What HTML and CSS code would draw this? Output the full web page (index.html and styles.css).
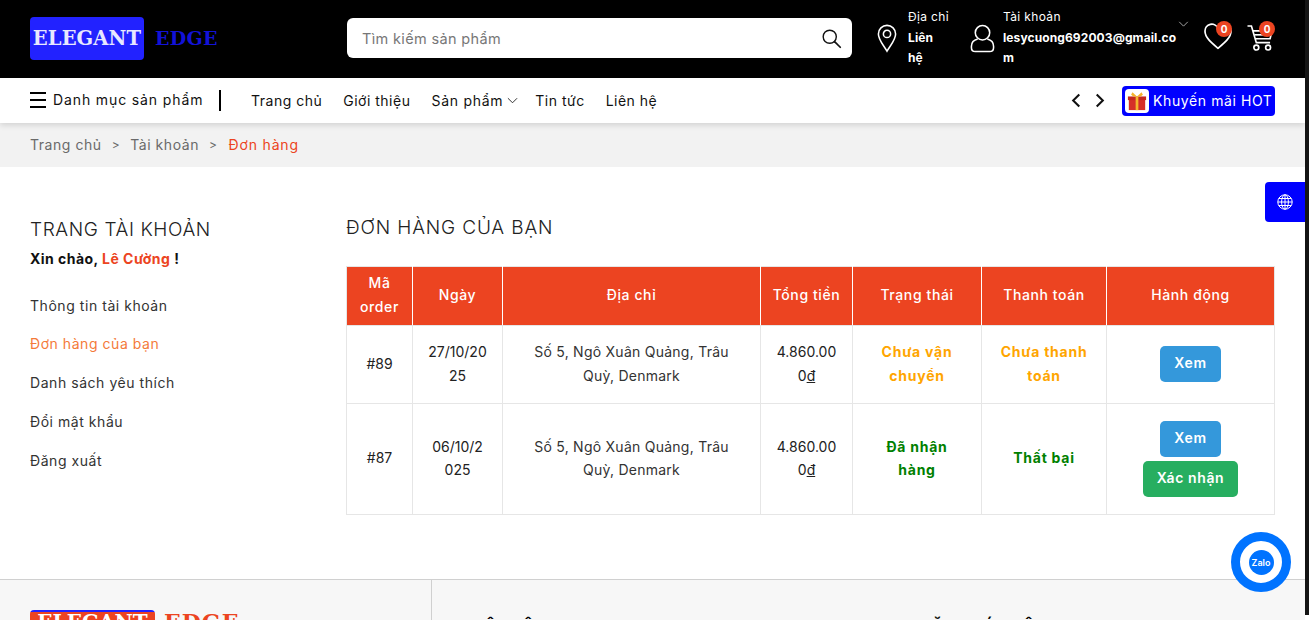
FILE: index.html
```html
<!DOCTYPE html>
<html lang="vi">
<head>
<meta charset="utf-8">
<title>Đơn hàng</title>
<link rel="stylesheet" href="styles.css">
</head>
<body>
<div class="page">
<header class="topbar">
  <a class="logo"><span class="logo-a">ELEGANT</span><span class="logo-b">EDGE</span></a>
  <form class="search">
    <span class="search-text">Tìm kiếm sản phẩm</span>
    <svg class="search-icon" viewBox="0 0 24 24" fill="none" stroke="#111" stroke-width="1.6" stroke-linecap="round"><circle cx="10" cy="10" r="7.5"/><path d="M15.5 15.5l6.5 6.5" stroke-width="2"/></svg>
  </form>
  <div class="info info-addr">
    <svg class="pin" viewBox="0 0 24 32" fill="none" stroke="#fff" stroke-width="1.7"><path d="M12 30C8 23 2.5 17.500 2.500 11a9.500 9.500 0 0 1 19 0C21.500 17.500 16 23 12 30z"/><circle cx="12" cy="11" r="4"/></svg>
    <div class="info-text"><div class="info-label">Địa chỉ</div><div class="info-val">Liên<br>hệ</div></div>
  </div>
  <div class="info info-acct">
    <svg class="user" viewBox="0 0 26 30" fill="none" stroke="#fff" stroke-width="1.6"><circle cx="13" cy="9" r="7.500"/><path d="M8 15.500C4 16.500 1.500 19 1.500 23v1.500c0 2.500 1.500 4 4 4h15c2.500 0 4-1.500 4-4V23c0-4-2.500-6.500-6.500-7.500"/></svg>
    <div class="info-text acct-text"><div class="info-label">Tài khoản</div><div class="info-val">lesycuong692003@gmail.co<br>m</div></div>
    <svg class="acct-chev" viewBox="0 0 12 7" fill="none" stroke="#bbb" stroke-width="1"><path d="M1 1l5 5 5-5"/></svg>
  </div>
  <div class="icon-btn heart-btn">
    <svg class="heart" viewBox="1 1 28 26.500" fill="none" stroke="#fff" stroke-width="1.700"><path d="M15 26C9 21 2 15.500 2 9a6.800 6.800 0 0 1 13-3 6.800 6.800 0 0 1 13 3c0 6.500-7 12-13 17z"/></svg>
    <span class="badge">0</span>
  </div>
  <div class="icon-btn cart-btn">
    <svg class="cart" viewBox="0.5 1 26.500 27.500" preserveAspectRatio="xMinYMin meet" fill="none" stroke="#fff" stroke-width="1.700"><path d="M1 2h4l5 17h14M6.500 7H26l-2 8H9"/><path d="M8 11h17"/><circle cx="10" cy="24" r="2.500"/><circle cx="22" cy="24" r="2.500"/></svg>
    <span class="badge">0</span>
  </div>
</header>

<nav class="navbar">
  <div class="cat"><span class="burger"><i></i><i></i><i></i></span><span class="cat-label">Danh mục sản phẩm</span></div>
  <div class="menu">
    <a>Trang chủ</a><a>Giới thiệu</a>
    <a class="has-sub">Sản phẩm<svg viewBox="0 0 12 7" fill="none" stroke="#222" stroke-width="1"><path d="M1 1l5 5 5-5"/></svg></a>
    <a>Tin tức</a><a>Liên hệ</a>
  </div>
  <div class="arrows">
    <svg viewBox="0 0 10 16" fill="none" stroke="#111" stroke-width="2.200"><path d="M8.500 1.500L2 8l6.500 6.500"/></svg>
    <svg viewBox="0 0 10 16" fill="none" stroke="#111" stroke-width="2.200"><path d="M1.500 1.500L8 8l-6.500 6.500"/></svg>
  </div>
  <a class="promo">
    <span class="gift"><svg viewBox="0 0 22 22"><rect x="2" y="8" width="18" height="13" fill="#d62f28"/><rect x="1" y="6" width="20" height="4" fill="#c4281f"/><rect x="9.500" y="6" width="3" height="15" fill="#f5b52c"/><path d="M11 6L6 1.500 4.500 4 7 6zM11 6l5-4.500L17.500 4 15 6z" fill="#f5b52c"/></svg></span>
    Khuyến mãi HOT
  </a>
</nav>

<div class="crumbs"><a>Trang chủ</a><span class="sep">&gt;</span><a>Tài khoản</a><span class="sep">&gt;</span><a class="cur">Đơn hàng</a></div>

<main class="account">
  <aside class="side">
    <h2>TRANG TÀI KHOẢN</h2>
    <p class="hello">Xin chào, <span>Lê Cường</span> !</p>
    <ul>
      <li>Thông tin tài khoản</li>
      <li class="active">Đơn hàng của bạn</li>
      <li>Danh sách yêu thích</li>
      <li>Đổi mật khẩu</li>
      <li>Đăng xuất</li>
    </ul>
  </aside>
  <section class="orders">
    <h1>ĐƠN HÀNG CỦA BẠN</h1>
    <table>
      <colgroup><col class="c1"><col class="c2"><col class="c3"><col class="c4"><col class="c5"><col class="c6"><col class="c7"></colgroup>
      <thead><tr><th>Mã order</th><th>Ngày</th><th>Địa chỉ</th><th>Tổng tiền</th><th>Trạng thái</th><th>Thanh toán</th><th>Hành động</th></tr></thead>
      <tbody>
        <tr class="r1"><td>#89</td><td>27/10/20<br>25</td><td class="addr">Số 5, Ngô Xuân Quảng, Trâu Quỳ, Denmark</td><td>4.860.00<br>0<u>đ</u></td><td class="st wait">Chưa vận chuyển</td><td class="st wait">Chưa thanh toán</td><td><a class="btn blue">Xem</a></td></tr>
        <tr class="r2"><td>#87</td><td>06/10/2<br>025</td><td class="addr">Số 5, Ngô Xuân Quảng, Trâu Quỳ, Denmark</td><td>4.860.00<br>0<u>đ</u></td><td class="st ok">Đã nhận hàng</td><td class="st ok">Thất bại</td><td class="acts"><a class="btn blue">Xem</a><a class="btn green">Xác nhận</a></td></tr>
      </tbody>
    </table>
  </section>
</main>

<footer class="foot">
  <div class="foot-left"><span class="flogo-a">ELEGANT</span><span class="flogo-b">EDGE</span></div>
  <div class="foot-right"><h4>LIÊN HỆ</h4><h4>ĐĂNG KÝ NHẬN TIN</h4></div>
</footer>
</div>

<a class="lang"><svg viewBox="0 0 16 16" fill="none" stroke="#fff" stroke-width="1"><circle cx="8" cy="8" r="7.200"/><ellipse cx="8" cy="8" rx="3.400" ry="7.200"/><path d="M8 .8v14.400M.8 8h14.400M1.700 4.500h12.600M1.700 11.500h12.600"/></svg></a>
<a class="zalo"><span>Zalo</span></a>
<div class="scroll"></div>
</body>
</html>
```

FILE: styles.css
```css
* { box-sizing: border-box; }
html, body { margin: 0; height: 620px; overflow: hidden; background: #fff; }
body { font-family: Inter, "Noto Sans", sans-serif; font-size: 14px; color: #222; }
.page { width: 1305px; height: 620px; overflow: hidden; }
a { color: inherit; text-decoration: none; }

.topbar { height: 78px; background: #000; display: flex; align-items: center; padding: 0 30px 2px; color: #fff; position: relative; }
.logo { display: flex; align-items: center; width: 317px; font-family: "DejaVu Serif", serif; font-weight: 700; }
.logo-a { width: 114px; height: 43px; background: #2222ff; border-radius: 4px; color: #e8e8ff; display: flex; align-items: center; justify-content: center; font-size: 19.500px; letter-spacing: .1px; }
.logo-b { color: #1212d8; margin-left: 11px; font-size: 19px; letter-spacing: .3px; }
.search { width: 505px; height: 40px; background: #fff; border-radius: 6px; display: flex; align-items: center; justify-content: space-between; padding: 0 10px 0 15px; }
.search-text { color: #777; font-size: 14.500px; letter-spacing: .35px; }
.search-icon { width: 21px; height: 21px; }
.info { display: flex; align-items: flex-start; align-self: flex-start; }
.info-addr { margin-left: 24px; width: 94px; }
.pin { width: 22px; height: 29px; margin: 24px 0 0 0; }
.info-text { margin-left: 10px; font-size: 12px; line-height: 20.500px; padding-top: 7px; }
.info-label { letter-spacing: .35px; }
.info-val { font-weight: 700; letter-spacing: .1px; }
.info-acct { width: 232px; position: relative; }
.user { width: 25px; height: 29px; margin: 24px 0 0 0; flex: none; }
.acct-text { white-space: nowrap; margin-left: 8px; }
.acct-chev { width: 11px; height: 6px; position: absolute; left: 208px; top: 21px; }
.icon-btn { position: relative; align-self: flex-start; }
.heart-btn { margin: 23px 0 0 2px; }
.heart { display: block; width: 28px; height: 27px; }
.cart-btn { margin: 25px 0 0 15px; }
.cart { display: block; width: 28px; height: 27px; }
.badge { position: absolute; right: 0; width: 16px; height: 16px; border-radius: 50%; background: #ec4421; color: #fff; font-size: 10px; font-weight: 700; text-align: center; line-height: 16px; }
.heart-btn .badge { top: -2px; }
.cart-btn .badge { top: -4px; }

.navbar { height: 45px; background: #fff; display: flex; align-items: center; padding: 0 30px; box-shadow: 0 2px 6px rgba(0,0,0,.14); position: relative; color: #111; }
.cat { display: flex; align-items: center; gap: 7px; width: 191px; height: 21px; border-right: 2px solid #000; letter-spacing: .88px; white-space: nowrap; }
.cat-label { padding-bottom: 2px; }
.burger { display: flex; flex-direction: column; justify-content: space-between; width: 16px; height: 16px; margin-bottom: 2px; }
.burger i { display: block; height: 2px; background: #000; }
.menu { display: flex; align-items: center; gap: 21px; margin-left: 30px; letter-spacing: .5px; }
.has-sub { display: flex; align-items: center; gap: 4px; margin-right: -4px; letter-spacing: .72px; }
.has-sub svg { width: 11px; height: 7px; }
.arrows { margin-left: auto; display: flex; gap: 14px; margin-right: 17px; }
.arrows svg { width: 10px; height: 15px; display: block; }
.promo { width: 153px; height: 30px; background: #0000ff; border-radius: 4px; color: #fff; display: flex; align-items: center; gap: 4px; padding-left: 3px; white-space: nowrap; letter-spacing: .6px; }
.gift { width: 24px; height: 24px; background: #fff; border-radius: 4px; display: flex; align-items: center; justify-content: center; }
.gift svg { width: 20px; height: 20px; }

.crumbs { height: 44px; background: #f2f2f2; display: flex; align-items: center; padding: 0 30px 1px; color: #6a6a6a; letter-spacing: .55px; }
.sep { margin: 0 10px; font-size: 12px; }
.cur { color: #ec4421; margin-left: 1px; letter-spacing: .85px; }

.account { display: flex; padding: 0 30px; height: 412px; }
.side { width: 316px; flex: none; }
.side h2 { margin: 52px 0 0; font-size: 19px; font-weight: 300; line-height: 22px; color: #222; letter-spacing: .6px; }
.hello { margin: 8px 0 0; font-weight: 700; line-height: 20px; color: #111; letter-spacing: .47px; }
.hello span { color: #ec4421; }
.side ul { list-style: none; margin: 16px 0 0; padding: 0; }
.side li { height: 39px; line-height: 39px; color: #333; letter-spacing: .55px; }
.side li:first-child { padding-top: 1px; }
.side li.active { color: #f47a3a; }
.orders { flex: 1; min-width: 0; padding-top: 50px; }
.orders h1 { margin: 0 0 27px; font-size: 19px; font-weight: 300; line-height: 22px; color: #222; letter-spacing: .85px; }
table { border-collapse: collapse; table-layout: fixed; width: 928px; }
.c1 { width: 66px; } .c2 { width: 90px; } .c3 { width: 258px; } .c4 { width: 92px; } .c5 { width: 129px; } .c6 { width: 125px; } .c7 { width: 168px; }
th, td { border: 1px solid #e6e6e6; text-align: center; padding: 0 10px 2px; font-size: 14px; line-height: 23.500px; }
thead tr { height: 59px; }
th { background: #ec4421; color: #fff; font-weight: 500; border-color: #fff; border-top-color: #e6e6e6; border-bottom-color: #e6e6e6; line-height: 24px; letter-spacing: .6px; }
th:first-child { border-left-color: #e6e6e6; }
th:last-child { border-right-color: #e6e6e6; }
.r1 { height: 78px; } .r2 { height: 111px; }
.addr { padding: 0 20px 2px; letter-spacing: .25px; color: #333; }
.st { font-weight: 700; padding: 0 15px 2px; letter-spacing: .75px; }
.wait { color: #ffa500; }
.ok { color: #008000; }
.btn { display: block; margin: 0 auto; height: 36px; line-height: 34px; border-radius: 5px; color: #fff; font-weight: 600; letter-spacing: .6px; }
.acts { padding-bottom: 0; }
.blue { background: #3498db; width: 61px; }
.green { background: #27ae60; margin-top: 4px; width: 95px; }

.foot { display: flex; height: 41px; background: #f7f7f7; border-top: 1px solid #d0d0d0; }
.foot-left { width: 432px; border-right: 1px solid #d0d0d0; padding: 30px 0 0 30px; display: flex; align-items: flex-start; font-family: "DejaVu Serif", serif; font-weight: 700; font-size: 20px; }
.flogo-a { width: 125px; height: 40px; border-radius: 4px 4px 0 0; background: linear-gradient(#2222ff 2px, #ec4421 2px); color: #fff; text-align: center; line-height: 24px; }
.flogo-b { color: #ec4421; margin-left: 9px; line-height: 24px; font-size: 22px; letter-spacing: 1px; }
.foot-right { flex: 1; display: flex; padding: 36px 0 0 40px; }
.foot-right h4 { margin: 0; font-size: 16px; font-weight: 700; line-height: 20px; color: #000; }
.foot-right h4:first-child { width: 448px; }

.lang { position: fixed; left: 1265px; top: 182px; width: 40px; height: 40px; background: #0000ff; border-radius: 4px 0 0 4px; display: flex; align-items: center; justify-content: center; }
.lang svg { width: 16px; height: 16px; }
.zalo { position: fixed; left: 1231px; top: 532px; width: 60px; height: 60px; border-radius: 50%; border: 9px solid #0073ff; background: #fff; display: flex; align-items: center; justify-content: center; }
.zalo span { width: 25px; height: 25px; border-radius: 50%; background: #0073ff; color: #fff; font-size: 9px; font-weight: 600; text-align: center; line-height: 25px; }
.scroll { position: fixed; left: 1305px; top: 0; width: 4px; height: 615px; background: #141414; }
```
